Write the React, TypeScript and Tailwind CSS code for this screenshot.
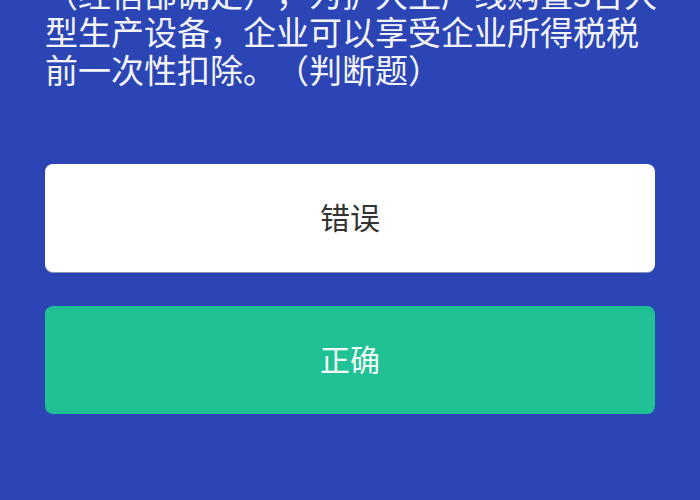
import React from 'react';

const lines = [
  '（经信部确定），为扩大生产线购置3台大',
  '型生产设备，企业可以享受企业所得税税',
  '前一次性扣除。（判断题）',
];

export default function App() {
  return (
    <div
      className="w-[700px] h-[500px] overflow-hidden bg-[#2c45b5] px-[45px]"
      style={{ fontFamily: '"Noto Sans CJK SC", "Noto Sans", sans-serif' }}
    >
      <div className="-mt-[26px] text-[33px] leading-[38px] text-[#f4f5fb] [text-spacing-trim:space-all]">
        {lines.map((l) => (
          <div key={l} className="whitespace-nowrap">{l}</div>
        ))}
      </div>

      <div className="mt-[76px] flex flex-col gap-[34px]">
        <button className="h-[108px] w-full rounded-[8px] bg-white pb-[4px] text-[30px] text-[#333333] shadow-[0_1px_0_#8a93b8]">
          错误
        </button>
        <button className="h-[108px] w-full rounded-[8px] bg-[#20c194] pb-[4px] text-[30px] text-[#f2fbf8]">
          正确
        </button>
      </div>
    </div>
  );
}
